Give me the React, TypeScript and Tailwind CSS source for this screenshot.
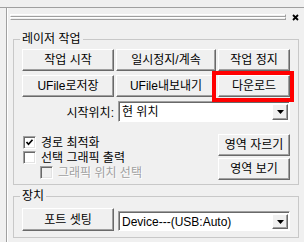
import React from 'react';

type BtnProps = { children: React.ReactNode; className?: string };

const Btn: React.FC<BtnProps> = ({ children, className = '' }) => (
  <div
    className={`flex items-center justify-center bg-[#f0f0f0] border-t border-l border-t-white border-l-white border-b border-r border-b-[#696969] border-r-[#696969] shadow-[inset_-1px_-1px_0_#a0a0a0] whitespace-nowrap ${className}`}
  >
    {children}
  </div>
);

const Combo: React.FC<{ value: string; className?: string }> = ({ value, className = '' }) => (
  <div
    className={`flex w-[172px] bg-white border-t border-l border-t-[#a0a0a0] border-l-[#a0a0a0] border-b border-r border-b-white border-r-white shadow-[inset_1px_1px_0_#696969] ${className}`}
  >
    <span className="flex-1 flex items-center pl-[3px] pt-[1px] whitespace-nowrap">{value}</span>
    <div className="w-[16px] mt-[2px] mb-px mr-px flex items-center justify-center bg-[#f0f0f0] border-t border-l border-t-white border-l-white border-b border-r border-b-[#696969] border-r-[#696969] shadow-[inset_-1px_-1px_0_#a0a0a0]">
      <svg width="7" height="4" viewBox="0 0 7 4">
        <polygon points="0,0 7,0 3.5,4" fill="#000" />
      </svg>
    </div>
  </div>
);

const CheckBox: React.FC<{ checked?: boolean; disabled?: boolean }> = ({ checked, disabled }) => (
  <div
    className={`w-[13px] h-[13px] shrink-0 flex items-center justify-center border-t border-l border-t-[#a0a0a0] border-l-[#a0a0a0] border-b border-r border-b-white border-r-white shadow-[inset_1px_1px_0_#696969,inset_-1px_-1px_0_#e3e3e3] ${disabled ? 'bg-[#f0f0f0]' : 'bg-white'}`}
  >
    {checked && (
      <svg width="9" height="9" viewBox="0 0 9 9">
        <path d="M1.5 4 L3.5 6.2 L7.5 1.8" stroke="#000" strokeWidth="1.7" fill="none" />
      </svg>
    )}
  </div>
);

export default function App() {
  return (
    <div className="w-[304px] h-[242px] bg-[#f0f0f0] overflow-hidden font-['Liberation_Sans','Noto_Sans_CJK_KR',sans-serif] text-[12px] leading-none text-black">
      <div className="h-[7px]" />
      <div className="h-px bg-[#a0a0a0]" />
      <div className="ml-[6px] h-[234px] border-l border-l-[#a0a0a0] shadow-[inset_1px_0_0_#fff]">
        {/* gripper + close */}
        <div className="flex items-start pt-[6px] h-[16px]">
          <div className="ml-[3px] w-[276px]">
            <div className="h-[3px] border-t border-l border-t-white border-l-white border-b border-r border-b-[#a0a0a0] border-r-[#a0a0a0]" />
            <div className="h-[3px] border-t border-l border-t-white border-l-white border-b border-r border-b-[#a0a0a0] border-r-[#a0a0a0]" />
          </div>
          <svg className="ml-[6px]" width="7" height="7" viewBox="0 0 7 7">
            <path d="M1 1 L6 6 M6 1 L1 6" stroke="#000" strokeWidth="1.8" />
          </svg>
        </div>

        {/* 레이저 작업 */}
        <fieldset className="mt-[8px] ml-[6px] w-[286px] border border-[#c8c8c8] px-[8px] pt-[3px] pb-[4px]">
          <legend className="-ml-[2px] px-[2px] leading-[14px]">레이저 작업</legend>
          <div className="flex gap-[2px] h-[22px]">
            <Btn className="w-[92px]">작업 시작</Btn>
            <Btn className="w-[100px]">일시정지/계속</Btn>
            <Btn className="w-[72px]">작업 정지</Btn>
          </div>
          <div className="flex gap-[2px] h-[22px] mt-[4px]">
            <Btn className="w-[92px]">UFile로저장</Btn>
            <Btn className="w-[100px]">UFile내보내기</Btn>
            <div className="relative w-[72px]">
              <Btn className="w-full h-full">다운로드</Btn>
              <div className="absolute -left-[6px] -top-[4px] -right-[4px] -bottom-[5px] border-[4px] border-[#ff0000]" />
            </div>
          </div>
          <div className="flex items-center mt-[4px]">
            <div className="w-[96px] pr-[4px] text-right pt-[3px]">시작위치:</div>
            <Combo value="현 위치" className="h-[21px]" />
          </div>
          <div className="flex mt-[12px]">
            <div className="flex-1 pt-[1px]">
              <div className="flex items-center h-[15px] pl-[1px]">
                <CheckBox checked />
                <span className="ml-[5px]">경로 최적화</span>
              </div>
              <div className="flex items-center h-[15px] pl-[1px]">
                <CheckBox />
                <span className="ml-[5px]">선택 그래픽 출력</span>
              </div>
              <div className="flex items-center h-[15px] pl-[18px]">
                <CheckBox disabled />
                <span className="ml-[5px] text-[#a0a0a0] [text-shadow:1px_1px_0_#fff]">그래픽 위치 선택</span>
              </div>
            </div>
            <div className="w-[72px] flex flex-col gap-[2px]">
              <Btn className="h-[22px]">영역 자르기</Btn>
              <Btn className="h-[22px]">영역 보기</Btn>
            </div>
          </div>
        </fieldset>

        {/* 장치 */}
        <fieldset className="mt-[4px] ml-[6px] w-[286px] border border-[#c8c8c8] px-[8px] pt-[5px] pb-[6px]">
          <legend className="-ml-[2px] px-[2px] leading-[14px]">장치</legend>
          <div className="flex items-end gap-[4px]">
            <Btn className="w-[92px] h-[23px]">포트 셋팅</Btn>
            <Combo value="Device---(USB:Auto)" className="h-[20px]" />
          </div>
        </fieldset>
      </div>
    </div>
  );
}
